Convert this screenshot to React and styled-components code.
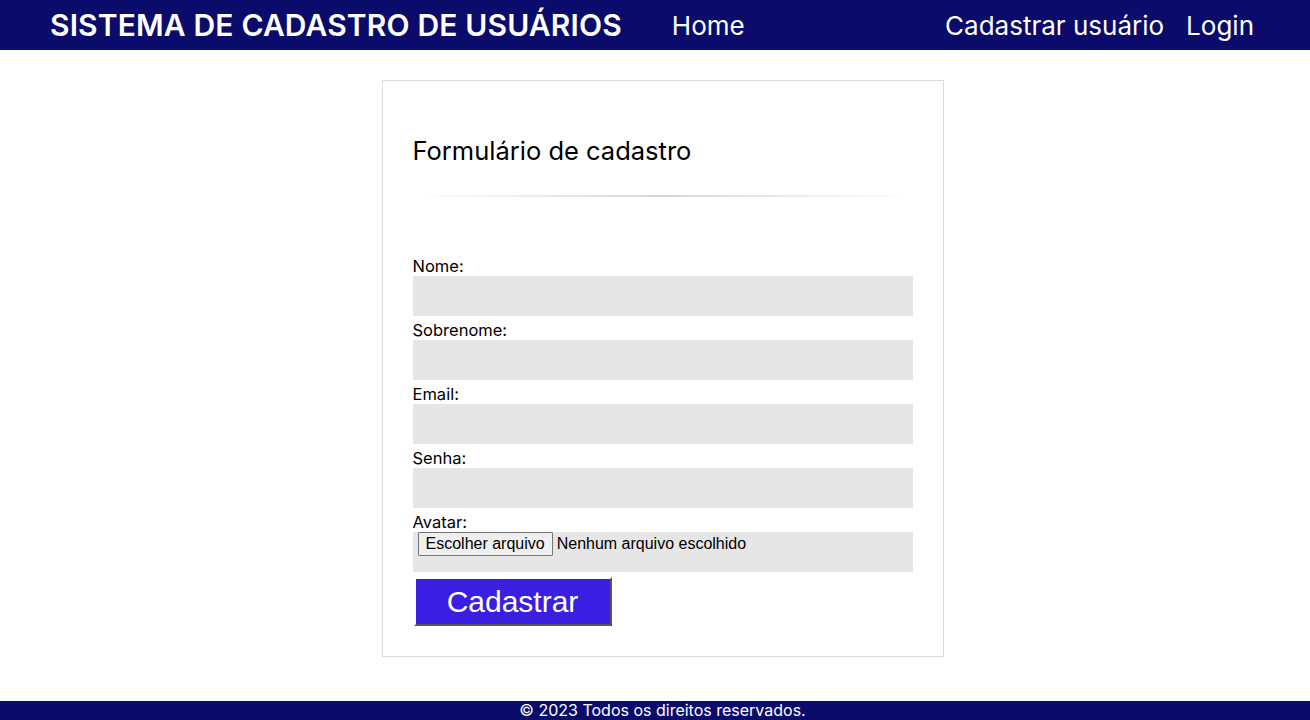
import React from 'react'
import styled, { createGlobalStyle } from 'styled-components'

const Global = createGlobalStyle`
  * { box-sizing: border-box; }
  body {
    margin: 0;
    font-family: Inter, "Noto Sans", sans-serif;
    background: #fff;
    color: #000;
  }
`

const Page = styled.div`
  min-height: 100vh;
  display: flex;
  flex-direction: column;
`

const Header = styled.header`
  height: 50px;
  background: #0b0b6c;
  display: flex;
  align-items: center;
  padding: 0 56px 0 50px;
  color: #fff;
`

const Brand = styled.h1`
  margin: 0;
  font-size: 30px;
  font-weight: 600;
  letter-spacing: 0.15px;
  white-space: nowrap;
`

const NavLink = styled.a`
  color: #fff;
  text-decoration: none;
  font-size: 26px;
  font-weight: 400;
  margin-left: ${p => p.gap || 0}px;
  white-space: nowrap;
`

const Spacer = styled.div`
  flex: 1;
`

const Main = styled.main`
  flex: 1;
  display: flex;
  justify-content: center;
  align-items: flex-start;
  padding: 30px 0 0 15px;
`

const Card = styled.form`
  width: 562px;
  border: 1px solid #dcdcdc;
  padding: 30px 30px 30px;
`

const Title = styled.h2`
  margin: 25px 0 0;
  font-size: 25.5px;
  font-weight: 400;
  line-height: 30px;
`

const Divider = styled.hr`
  border: 0;
  height: 2px;
  margin: 29px 0 59px;
  background: linear-gradient(to right, rgba(200,200,200,0), #d6d6d6 50%, rgba(200,200,200,0));
`

const Field = styled.div`
  display: flex;
  flex-direction: column;
  margin-bottom: 4px;
`

const Label = styled.label`
  font-size: 16.5px;
  line-height: 20px;
  font-weight: 400;
  color: #000;
`

const Input = styled.input`
  height: 40px;
  width: 100%;
  border: 0;
  background: #e6e6e6;
  outline: none;
  padding: 0 8px;
  font-size: 15px;
`

const FileBox = styled.div`
  height: 40px;
  background: #e6e6e6;
  display: flex;
  align-items: flex-start;
  padding: 0 5px;
  font-family: "Liberation Sans", Arial, sans-serif;
  font-size: 16px;
`

const FileButton = styled.span`
  height: 24px;
  padding: 0 7px;
  border: 1px solid #767676;
  background: #efefef;
  border-radius: 1px;
  display: flex;
  align-items: center;
  color: #000;
`

const FileText = styled.span`
  margin-left: 4px;
  line-height: 24px;
`

const Submit = styled.button`
  margin: 1px 0 0 1px;
  width: 198px;
  height: 49px;
  background: #3a1fe3;
  color: #fff;
  font-family: "Liberation Sans", Arial, sans-serif;
  font-size: 30px;
  border: 2px outset #aaa;
  border-top-color: #fff;
  border-left-color: #fff;
  cursor: pointer;
`

const Footer = styled.footer`
  height: 19px;
  background: #0b0b6c;
  color: #fff;
  text-align: center;
  font-size: 16px;
  line-height: 19px;
  padding-left: 15px;
`

const fields = ['Nome', 'Sobrenome', 'Email', 'Senha']

export default function App() {
  return (
    <Page>
      <Global />
      <Header>
        <Brand>SISTEMA DE CADASTRO DE USUÁRIOS</Brand>
        <NavLink href="#" gap={50}>Home</NavLink>
        <Spacer />
        <NavLink href="#">Cadastrar usuário</NavLink>
        <NavLink href="#" gap={22}>Login</NavLink>
      </Header>
      <Main>
        <Card onSubmit={e => e.preventDefault()}>
          <Title>Formulário de cadastro</Title>
          <Divider />
          {fields.map(f => (
            <Field key={f}>
              <Label>{f}:</Label>
              <Input type={f === 'Senha' ? 'password' : 'text'} />
            </Field>
          ))}
          <Field>
            <Label>Avatar:</Label>
            <FileBox>
              <FileButton>Escolher arquivo</FileButton>
              <FileText>Nenhum arquivo escolhido</FileText>
            </FileBox>
          </Field>
          <Submit type="submit">Cadastrar</Submit>
        </Card>
      </Main>
      <Footer>© 2023 Todos os direitos reservados.</Footer>
    </Page>
  )
}
